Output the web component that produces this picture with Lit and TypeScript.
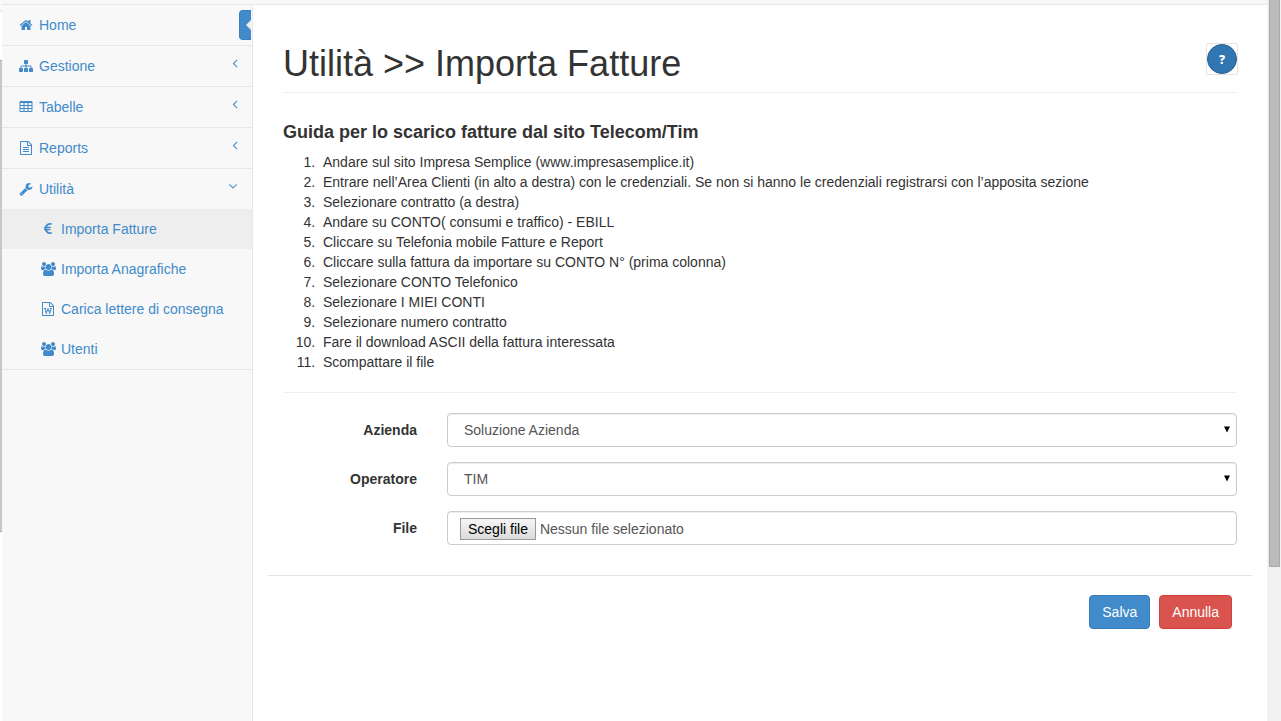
import { LitElement, html, css, svg } from "lit";
import { customElement, property, state } from "lit/decorators.js";

const FILE_OUTLINE =
  "M1596 380q28 28 48 76t20 88v1152q0 40-28 68t-68 28h-1344q-40 0-68-28t-28-68v-1600q0-40 28-68t68-28h896q40 0 88 20t76 48zm-444-244v376h376q-10-29-22-41l-313-313q-12-12-41-22zm384 1528v-1024h-416q-40 0-68-28t-28-68v-416h-768v1536h1280z";

const cell = (x: number, y: number) =>
  `M${x + 384} ${y + 224}v-192q0-14-9-23t-23-9h-320q-14 0-23 9t-9 23v192q0 14 9 23t23 9h320q14 0 23-9t9-23z`;

const TABLE_CELLS = [192, 704, 1216].flatMap((x) => [384, 768, 1152].map((y) => cell(x, y))).join("");

const ICONS: Record<string, string> = {
  home: "M1472 992v480q0 26-19 45t-45 19h-384v-384h-256v384h-384q-26 0-45-19t-19-45v-480q0-1 .5-3t.5-3l575-474 575 474q1 2 1 6zm223-69l-62 74q-8 9-21 11h-3q-13 0-21-7l-692-577-692 577q-12 8-24 7-13-2-21-11l-62-74q-8-10-7-23.5t11-21.5l719-599q32-26 76-26t76 26l244 204v-195q0-14 9-23t23-9h192q14 0 23 9t9 23v408l219 182q10 8 11 21.5t-7 23.5z",
  sitemap:
    "M1792 1248v320q0 40-28 68t-68 28h-320q-40 0-68-28t-28-68v-320q0-40 28-68t68-28h96v-192h-512v192h96q40 0 68 28t28 68v320q0 40-28 68t-68 28h-320q-40 0-68-28t-28-68v-320q0-40 28-68t68-28h96v-192h-512v192h96q40 0 68 28t28 68v320q0 40-28 68t-68 28h-320q-40 0-68-28t-28-68v-320q0-40 28-68t68-28h96v-192q0-52 38-90t90-38h512v-192h-96q-40 0-68-28t-28-68v-320q0-40 28-68t68-28h320q40 0 68 28t28 68v320q0 40-28 68t-68 28h-96v192h512q52 0 90 38t38 90v192h96q40 0 68 28t28 68z",
  table: `M224 128h1344q66 0 113 47t47 113v1088q0 66-47 113t-113 47h-1344q-66 0-113-47t-47-113v-1088q0-66 47-113t113-47z${TABLE_CELLS}`,
  file: `${FILE_OUTLINE}M512 800q0-14 9-23t23-9h704q14 0 23 9t9 23v64q0 14-9 23t-23 9h-704q-14 0-23-9t-9-23v-64zm736 224q14 0 23 9t9 23v64q0 14-9 23t-23 9h-704q-14 0-23-9t-9-23v-64q0-14 9-23t23-9h704zm0 256q14 0 23 9t9 23v64q0 14-9 23t-23 9h-704q-14 0-23-9t-9-23v-64q0-14 9-23t23-9h704z`,
  word: FILE_OUTLINE,
  wrench:
    "M448 1472q0-26-19-45t-45-19-45 19-19 45 19 45 45 19 45-19 19-45zm644-420l-682 682q-37 37-90 37-52 0-91-37l-106-108q-38-36-38-90 0-53 38-91l681-681q39 98 114.5 173.5t173.5 114.5zm634-435q0 39-23 106-47 134-164.5 217.5t-258.5 83.5q-185 0-316.5-131.5t-131.5-316.5 131.5-316.5 316.5-131.5q58 0 121.5 16.5t107.5 46.5q16 11 16 28t-16 28l-293 169v224l193 107q5-3 79-48.5t135.5-81 70.5-35.5q15 0 23.5 10t8.5 25z",
  euro: "M1360 1307l35 159q3 12-3 22.5t-17 14.5l-5 1q-4 2-10.5 3.5t-16 4.5-21.5 5.5-25.5 5-30 5-33.5 4.5-36.5 3-38.5 1q-234 0-409-130.5t-238-351.5h-95q-13 0-22.5-9.5t-9.5-22.5v-113q0-13 9.5-22.5t22.5-9.5h66q-2-57 1-105h-67q-14 0-23-9t-9-23v-114q0-14 9-23t23-9h98q67-210 243.5-338t400.5-128q102 0 194 23 11 3 20 15 6 11 3 24l-43 159q-3 13-14 19.5t-24 2.5l-4-1q-4-1-11.5-2.5l-17.5-3.5-22.5-3.5-26-3-29-2.5-29.5-1q-126 0-226 64t-150 176h468q16 0 25 12 10 12 7 26l-24 114q-5 26-32 26h-488q-3 37 0 105h459q15 0 25 12 9 12 6 27l-24 112q-2 11-11 18.5t-20 7.5h-387q48 117 149.5 185.5t228.5 68.5q18 0 36-1.5t33.5-3.5 29.5-4.5 24.5-5 18.5-4.5l12-3 5-2q13-5 26 2 12 7 15 21z",
  users:
    "M529 896q-162 5-265 128h-134q-82 0-138-40.5t-56-118.5q0-353 124-353 6 0 43.5 21t97.5 42.5 119 21.5q67 0 133-23-5 37-5 66 0 139 81 256zm1071 637q0 120-73 189.5t-194 69.5h-874q-121 0-194-69.5t-73-189.5q0-53 3.5-103.5t14-109 26.5-108.5 43-97.5 62-81 85.5-53.5 111.5-20q10 0 43 21.5t73 48 107 48 135 21.5 135-21.5 107-48 73-48 43-21.5q61 0 111.5 20t85.5 53.5 62 81 43 97.5 26.5 108.5 14 109 3.5 103.5zm-1024-1277q0 106-75 181t-181 75-181-75-75-181 75-181 181-75 181 75 75 181zm704 384q0 159-112.5 271.5t-271.5 112.5-271.5-112.5-112.5-271.5 112.5-271.5 271.5-112.5 271.5 112.5 112.5 271.5zm576 225q0 78-56 118.5t-138 40.5h-134q-103-123-265-128 81-117 81-256 0-29-5-66 66 23 133 23 59 0 119-21.5t97.5-42.5 43.5-21q124 0 124 353zm-128-609q0 106-75 181t-181 75-181-75-75-181 75-181 181-75 181 75 75 181z",
  left: "M1203 544q0 13-10 23l-393 393 393 393q10 10 10 23t-10 23l-50 50q-10 10-23 10t-23-10l-466-466q-10-10-10-23t10-23l466-466q10-10 23-10t23 10l50 50q10 10 10 23z",
  down: "M1395 736q0 13-10 23l-466 466q-10 10-23 10t-23-10l-466-466q-10-10-10-23t10-23l50-50q10-10 23-10t23 10l393 393 393-393q10-10 23-10t23 10l50 50q10 10 10 23z",
};

@customElement("app-icon")
export class AppIcon extends LitElement {
  static styles = css`
    :host {
      display: flex;
      justify-content: center;
      align-items: center;
      flex: none;
      width: 18px;
      height: 20px;
    }
    .glyph {
      display: block;
      height: 14px;
      overflow: visible;
      fill: currentColor;
    }
    .letter {
      fill: none;
      stroke: currentColor;
      stroke-width: 130;
    }
  `;

  @property() name = "home";

  render() {
    const box = this.name === "users" ? "-64 0 1920 1792" : "0 0 1792 1792";
    return html`<svg class="glyph" viewBox=${box} aria-hidden="true">
      <path fill-rule="evenodd" d=${ICONS[this.name]} />
      ${this.name === "word"
        ? svg`<path class="letter" d="M380 830h280M1130 830h280M500 830l160 600 235-560 235 560 160-600" />`
        : null}
    </svg>`;
  }
}

interface Entry {
  label: string;
  icon: string;
  arrow?: string;
  active?: boolean;
  children?: Entry[];
}

const MENU: Entry[] = [
  { label: "Home", icon: "home" },
  { label: "Gestione", icon: "sitemap", arrow: "left" },
  { label: "Tabelle", icon: "table", arrow: "left" },
  { label: "Reports", icon: "file", arrow: "left" },
  {
    label: "Utilità",
    icon: "wrench",
    arrow: "down",
    children: [
      { label: "Importa Fatture", icon: "euro", active: true },
      { label: "Importa Anagrafiche", icon: "users" },
      { label: "Carica lettere di consegna", icon: "word" },
      { label: "Utenti", icon: "users" },
    ],
  },
];

@customElement("side-menu")
export class SideMenu extends LitElement {
  static styles = css`
    :host {
      display: block;
      position: relative;
      box-sizing: border-box;
      flex: none;
      width: 251px;
      background: #f8f8f8;
      border-right: 1px solid #e7e7e7;
    }
    .list {
      list-style: none;
      margin: 0;
      padding: 0;
    }
    .group {
      border-bottom: 1px solid #e7e7e7;
    }
    .link {
      display: flex;
      align-items: center;
      gap: 4px;
      padding: 10px 15px;
      color: #428bca;
      text-decoration: none;
    }
    .sub {
      padding-left: 37px;
    }
    .active {
      background: #eee;
    }
    .arrow {
      margin: -6px -7px 0 auto;
    }
    .arrow.down {
      margin-right: -5px;
    }
    .toggle {
      position: absolute;
      top: 5px;
      right: 1px;
      width: 12px;
      height: 30px;
      padding: 0;
      display: flex;
      align-items: center;
      justify-content: flex-end;
      background: #428bca;
      border: 1px solid #3a80bd;
      border-right: 0;
      border-radius: 4px 0 0 4px;
    }
    .caret {
      border: 5px solid transparent;
      border-right-color: #eee;
      border-left: 0;
    }
  `;

  private link(entry: Entry, sub = false) {
    return html`<a class="link ${sub ? "sub" : ""} ${entry.active ? "active" : ""}" href="#">
      <app-icon name=${entry.icon}></app-icon>
      <span>${entry.label}</span>
      ${entry.arrow ? html`<app-icon class="arrow ${entry.arrow}" name=${entry.arrow}></app-icon>` : null}
    </a>`;
  }

  render() {
    return html`
      <nav aria-label="Menu">
        <ul class="list">
          ${MENU.map(
            (entry) => html`<li class="group">
              ${this.link(entry)}
              ${entry.children
                ? html`<ul class="list">
                    ${entry.children.map((child) => html`<li>${this.link(child, true)}</li>`)}
                  </ul>`
                : null}
            </li>`,
          )}
        </ul>
      </nav>
      <button class="toggle" type="button" aria-label="Menu"><span class="caret"></span></button>
    `;
  }
}

const STEPS = [
  "Andare sul sito Impresa Semplice (www.impresasemplice.it)",
  "Entrare nell’Area Clienti (in alto a destra) con le credenziali. Se non si hanno le credenziali registrarsi con l’apposita sezione",
  "Selezionare contratto (a destra)",
  "Andare su CONTO( consumi e traffico) - EBILL",
  "Cliccare su Telefonia mobile Fatture e Report",
  "Cliccare sulla fattura da importare su CONTO N° (prima colonna)",
  "Selezionare CONTO Telefonico",
  "Selezionare I MIEI CONTI",
  "Selezionare numero contratto",
  "Fare il download ASCII della fattura interessata",
  "Scompattare il file",
];

@customElement("import-page")
export class ImportPage extends LitElement {
  static styles = css`
    :host {
      display: block;
      flex: 1;
      min-width: 0;
      padding: 0 15px;
      background: #fff;
    }
    .body {
      padding: 0 15px;
    }
    .header {
      display: flex;
      justify-content: space-between;
      align-items: flex-start;
      padding: 38px 0 8px;
      border-bottom: 1px solid #eee;
    }
    .title {
      margin: 1px 0 0;
      font-size: 36px;
      line-height: 40px;
      font-weight: 400;
    }
    .help {
      box-sizing: border-box;
      width: 32px;
      height: 32px;
      margin-right: -1px;
      padding: 0;
      border: 1px solid #e7e3df;
      border-radius: 2px;
      background: #fff;
    }
    .disc {
      display: flex;
      align-items: center;
      justify-content: center;
      box-sizing: border-box;
      width: 30px;
      height: 30px;
      border: 1px solid #245f93;
      border-radius: 50%;
      background: #3276b1;
      color: #fff;
      font: 800 12px "Open Sans", "Liberation Sans", sans-serif;
    }
    .subtitle {
      margin: 29px 0 10px;
      font-size: 18px;
      line-height: 20px;
      font-weight: 700;
    }
    .steps {
      margin: 0;
      padding: 0 0 20px 40px;
      border-bottom: 1px solid #eee;
    }
    .step::marker {
      content: counter(list-item) ".\\00a0\\00a0";
    }
    .row {
      display: grid;
      grid-template-columns: 1fr 5fr;
      margin-top: 15px;
    }
    .row:first-child {
      margin-top: 20px;
    }
    .label {
      padding: 7px 15px 0 0;
      text-align: right;
      font-weight: 700;
    }
    .field {
      position: relative;
      margin: 0 15px;
    }
    .control {
      box-sizing: border-box;
      display: block;
      width: 100%;
      height: 34px;
      border: 1px solid #ccc;
      border-radius: 4px;
      background: #fff;
      box-shadow: inset 0 1px 1px rgba(0, 0, 0, 0.075);
      color: #555;
      font: inherit;
    }
    .select {
      appearance: none;
      padding: 0 16px;
    }
    .mark {
      position: absolute;
      right: 7px;
      top: 13px;
      width: 6px;
      height: 7px;
      fill: #000;
      pointer-events: none;
    }
    .picker {
      display: flex;
      align-items: center;
      gap: 4px;
      padding: 2px 12px 0;
    }
    .choose {
      box-sizing: border-box;
      height: 22px;
      padding: 0 7px;
      border: 1px solid #999;
      background: linear-gradient(#f6f6f6, #dcdcdc);
      color: #000;
    }
    .file {
      position: absolute;
      inset: 0;
      width: 100%;
      opacity: 0;
    }
    .actions {
      display: flex;
      justify-content: flex-end;
      gap: 9px;
      margin-top: 30px;
      padding: 19px 20px;
      border-top: 1px solid #e5e5e5;
    }
    .button {
      height: 34px;
      padding: 0 12px;
      border: 1px solid #357ebd;
      border-radius: 4px;
      background: #428bca;
      color: #fff;
      font: inherit;
    }
    .danger {
      border-color: #d43f3a;
      background: #d9534f;
    }
  `;

  @state() private fileName = "Nessun file selezionato";

  private pick(event: Event) {
    const file = (event.target as HTMLInputElement).files?.[0];
    this.fileName = file ? file.name : "Nessun file selezionato";
  }

  private select(id: string, label: string, value: string) {
    return html`<div class="row">
      <label class="label" for=${id}>${label}</label>
      <div class="field">
        <select class="control select" id=${id}>
          <option>${value}</option>
        </select>
        <svg class="mark" viewBox="0 0 6 7" aria-hidden="true"><path d="M0 0.5h6l-3 6z" /></svg>
      </div>
    </div>`;
  }

  render() {
    return html`<main>
      <div class="body">
        <header class="header">
          <h1 class="title">Utilità &gt;&gt; Importa Fatture</h1>
          <button class="help" type="button"><span class="disc">?</span></button>
        </header>
        <h4 class="subtitle">Guida per lo scarico fatture dal sito Telecom/Tim</h4>
        <ol class="steps">
          ${STEPS.map((step) => html`<li class="step">${step}</li>`)}
        </ol>
      </div>
      <form>
        ${this.select("azienda", "Azienda", "Soluzione Azienda")} ${this.select("operatore", "Operatore", "TIM")}
        <div class="row">
          <label class="label" for="file">File</label>
          <div class="field">
            <div class="control picker">
              <span class="choose">Scegli file</span>
              <span>${this.fileName}</span>
            </div>
            <input class="file" id="file" type="file" @change=${this.pick} />
          </div>
        </div>
        <div class="actions">
          <button class="button" type="button">Salva</button>
          <button class="button danger" type="button">Annulla</button>
        </div>
      </form>
    </main>`;
  }
}

@customElement("app-root")
export class AppRoot extends LitElement {
  static styles = css`
    :host {
      display: flex;
      min-height: 100vh;
      font: 14px/20px "Liberation Sans", Arial, sans-serif;
      color: #333;
      background: #fff;
    }
    .edge {
      box-sizing: border-box;
      flex: none;
      width: 2px;
      display: grid;
      grid-template-rows: 12px 48px 472px 1fr;
    }
    .edge-top {
      background: #f8f8f8;
      border-bottom: 1px solid #e7e7e7;
    }
    .edge-bar {
      grid-row: 3;
      background: #c8c8c8;
      border: solid #aaa;
      border-width: 1px 0;
    }
    .page {
      display: flex;
      flex-direction: column;
      flex: 1;
      min-width: 0;
    }
    .navbar {
      height: 4px;
      background: #f8f8f8;
      border-bottom: 1px solid #e7e7e7;
    }
    .columns {
      display: flex;
      flex: 1;
    }
    .track {
      box-sizing: border-box;
      flex: none;
      width: 14px;
      padding: 0 1px 0 2px;
      background: #f1f1f1;
    }
    .thumb {
      box-sizing: border-box;
      height: 567px;
      border: 1px solid #a8a8a8;
      border-top: 0;
      background: #bcbcbc;
    }
  `;

  render() {
    return html`
      <div class="edge">
        <div class="edge-top"></div>
        <div class="edge-bar"></div>
      </div>
      <div class="page">
        <div class="navbar"></div>
        <div class="columns">
          <side-menu></side-menu>
          <import-page></import-page>
        </div>
      </div>
      <div class="track"><div class="thumb"></div></div>
    `;
  }
}
